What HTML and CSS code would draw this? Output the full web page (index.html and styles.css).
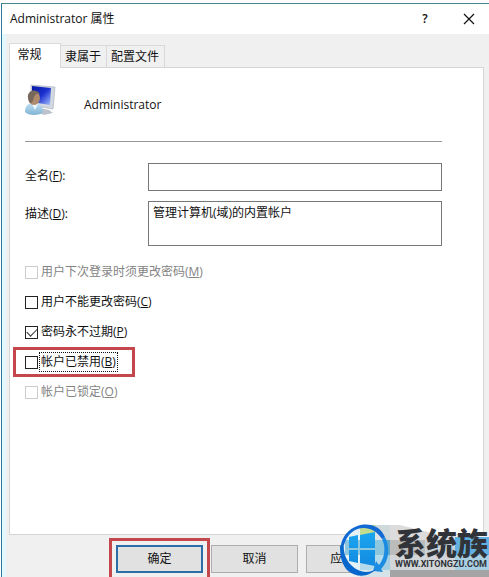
FILE: index.html
```
<!DOCTYPE html>
<html lang="zh-CN">
<head>
    <meta charset="UTF-8">
    <meta name="viewport" content="width=device-width, initial-scale=1.0">
    <title>Administrator 属性</title>
    <link rel="stylesheet" href="styles.css">
</head>
<body>
    <div class="window">
        <header class="titlebar">
            <h1>Administrator 属性</h1>
            <button type="button" class="help" aria-label="帮助">?</button>
            <button type="button" class="close" aria-label="关闭">
                <svg width="12" height="12" viewBox="0 0 12 12"><path d="M1 1l10 10M11 1L1 11" stroke="#111" stroke-width="1.2"/></svg>
            </button>
        </header>
        <form class="dialog">
            <div class="tabs">
                <button type="button" class="tab active">常规</button>
                <button type="button" class="tab">隶属于</button>
                <button type="button" class="tab">配置文件</button>
            </div>
            <div class="panel">
                <div class="account">
                    <svg width="34" height="34" viewBox="0 0 34 34">
                        <defs>
                            <linearGradient id="screen" x1="0" y1="0" x2="1" y2="1">
                                <stop offset="0" stop-color="#0818a0"/>
                                <stop offset=".5" stop-color="#1c30d0"/>
                                <stop offset="1" stop-color="#a8c4ff"/>
                            </linearGradient>
                            <linearGradient id="shirt" x1="0" y1="0" x2="0" y2="1">
                                <stop offset="0" stop-color="#c4e2f4"/>
                                <stop offset="1" stop-color="#7fb2d4"/>
                            </linearGradient>
                        </defs>
                        <path d="M15 24l9 2 4 3-9 2-7-3z" fill="#bcc3cb"/>
                        <path d="M6 1l24 2-2 22-22-4z" fill="#d4d9e0" stroke="#a3abb8" stroke-width=".6"/>
                        <path d="M7 2l19 2-1 17-18-3z" fill="url(#screen)"/>
                        <path d="M0 28c0-6 3-9 8-9 6 0 10 3 10 9-3 4-15 4-18 0z" fill="url(#shirt)"/>
                        <path d="M7 20l3 6 3-6z" fill="#eef8ff"/>
                        <ellipse cx="9" cy="14" rx="6" ry="7" fill="#b08a6c"/>
                        <path d="M3 14c-1-8 8-10 12-4-4-1-5 1-6 3-1 4-2 6-4 6z" fill="#77685c"/>
                    </svg>
                    <span>Administrator</span>
                </div>
                <div class="field">
                    <label for="fullname">全名(<u>F</u>):</label>
                    <input type="text" id="fullname">
                </div>
                <div class="field">
                    <label for="description">描述(<u>D</u>):</label>
                    <textarea id="description">管理计算机(域)的内置帐户</textarea>
                </div>
                <div class="options">
                    <label class="check disabled"><input type="checkbox" disabled><span>用户下次登录时须更改密码(<u>M</u>)</span></label>
                    <label class="check"><input type="checkbox"><span>用户不能更改密码(<u>C</u>)</span></label>
                    <label class="check"><input type="checkbox" checked><span>密码永不过期(<u>P</u>)</span></label>
                    <label class="check marked"><input type="checkbox"><span>帐户已禁用(<u>B</u>)</span></label>
                    <label class="check disabled"><input type="checkbox" disabled><span>帐户已锁定(<u>O</u>)</span></label>
                </div>
            </div>
            <div class="buttons">
                <button type="button" class="btn primary">确定</button>
                <button type="button" class="btn">取消</button>
                <button type="button" class="btn">应用(A)</button>
            </div>
        </form>
        <div class="watermark">
            <svg class="mosaic" viewBox="0 0 149 54">
                <path d="M20 2h15v15H20z" fill="#bbd985"/>
                <path d="M35 2h15v15H35z" fill="#d0d9da"/>
                <path d="M50 2h10l36 9h20v6H50z" fill="#dcdcdc"/>
                <path d="M5 17h15v11H5zM35 17h15v15H35z" fill="#62a8c5"/>
                <path d="M35 32h15v15H35z" fill="#a5cfe2"/>
                <path d="M20 47h30v7H20z" fill="#d5e2e7"/>
                <path d="M50 17h35v15H50z" fill="#bcbcbc"/>
                <path d="M50 32h65v15H50z" fill="#d3d6d8"/>
                <path d="M85 17h30v15H85z" fill="#c9d4da"/>
                <path d="M115 14h34v18h-34z" fill="#62b0e2"/>
                <path d="M115 32h34v15h-34z" fill="#a9cfe4"/>
                <path d="M50 47h99v7H50z" fill="#a4a4a4"/>
            </svg>
            <svg class="logo" width="50" height="54" viewBox="0 0 50 54">
                <defs>
                    <clipPath id="disc"><circle cx="24" cy="26" r="22"/></clipPath>
                    <linearGradient id="pane" x1="0" y1="0" x2="0" y2="1">
                        <stop offset="0" stop-color="#1ba6f0"/>
                        <stop offset="1" stop-color="#128ae0"/>
                    </linearGradient>
                </defs>
                <g clip-path="url(#disc)">
                    <path d="M0 0h50v54H0z" fill="#e4f1f6"/>
                    <path d="M20 0h15v17H20z" fill="#c3dd8c"/>
                    <path d="M35 0h15v17H35z" fill="#dbe3e4"/>
                    <path d="M5 17h45v15H5z" fill="#8cc6df"/>
                    <path d="M20 32h30v15H20z" fill="#b4dbeb"/>
                </g>
                <path d="M1 22C4 5 24-4 38 5c3 2 5 5 7 9l-3 2C32 0 10 1 4 22z" fill="#1269d3"/>
                <path d="M45 14c6 12 3 25-4 32l2 3-10-1 3-10 3 4c6-7 7-18 3-26z" fill="#1c8ce2"/>
                <path d="M0 23l4-3c-2 15 8 28 22 29 4 0 7-1 10-3-7 8-19 9-28 2C2 42 0 34 0 23z" fill="#0867cc"/>
                <path d="M9 14l9-2v13H9zM20 12l15-3v16H20zM9 27h9v13l-9-2zM20 27h15v16l-15-3z" fill="url(#pane)"/>
            </svg>
            <div class="brand">
                <strong>系统族</strong>
                <span>WWW.XITONGZU.COM</span>
            </div>
        </div>
    </div>
</body>
</html>
```
FILE: styles.css
```
* {
    box-sizing: border-box;
}
body {
    margin: 0;
    padding: 3px 0 0 1px;
    background: #fff;
    color: #111;
    font-family: "Open Sans", "Noto Sans CJK SC", sans-serif;
    font-size: 12px;
    line-height: 18px;
    overflow: hidden;
}
button, input, textarea {
    font: inherit;
    color: inherit;
    margin: 0;
}
.window {
    position: relative;
    display: flex;
    flex-direction: column;
    min-height: calc(100vh - 3px);
    border-top: 1px solid #42868f;
    border-left: 1px solid #2c7a9c;
    background: #f0f0f0;
    box-shadow: inset 4px 0 #e2f8fd;
}
.titlebar {
    display: flex;
    align-items: center;
    height: 30px;
    padding: 0 12px 0 8px;
    background: #fff;
}
.titlebar h1 {
    flex: 1;
    margin: 0;
    font-size: 12px;
    font-weight: normal;
}
.titlebar button {
    display: flex;
    align-items: center;
    justify-content: center;
    width: 16px;
    height: 20px;
    padding: 0;
    border: 0;
    background: none;
}
.titlebar .help {
    margin-right: 28px;
    font-weight: 600;
}
.dialog {
    flex: 1;
    display: flex;
    flex-direction: column;
    padding: 9px 5px 0 7px;
}
.tabs {
    display: flex;
    align-items: flex-end;
    height: 25px;
    margin-bottom: -1px;
}
.tab {
    height: 23px;
    padding: 0 5px 0 4px;
    border: 1px solid #d9d9d9;
    border-left: 0;
    background: #f0f0f0;
}
.tab.active {
    z-index: 1;
    width: 52px;
    height: 25px;
    padding: 0 18px 3px 7px;
    border-left: 1px solid #d9d9d9;
    border-bottom: 0;
    background: #fff;
}
.panel {
    flex: 1;
    padding: 16px 41px 16px 15px;
    border: 1px solid #d5d5d5;
    background: #fff;
}
.account {
    display: flex;
    gap: 25px;
    height: 58px;
    margin-bottom: 21px;
    border-bottom: 1px solid #999;
}
.account span {
    padding-top: 12px;
}
.field {
    display: flex;
    margin-bottom: 10px;
}
.field label {
    width: 123px;
    padding-top: 4px;
}
.field input,
.field textarea {
    flex: 1;
    min-width: 0;
    height: 28px;
    padding: 2px 4px;
    border: 1px solid #777;
    border-radius: 0;
    background: #fff;
    resize: none;
}
.field textarea {
    height: 45px;
}
.options {
    display: flex;
    flex-direction: column;
    align-items: flex-start;
    margin-top: 11px;
}
.check {
    display: flex;
    align-items: center;
    gap: 2px;
    height: 30px;
}
.check input {
    display: grid;
    place-items: center;
    appearance: none;
    width: 13px;
    height: 13px;
    border: 1px solid #222;
    background: #fff;
}
.check input:checked::after {
    content: "";
    width: 9px;
    height: 5px;
    margin-bottom: 2px;
    border: solid #333;
    border-width: 0 0 1px 1px;
    transform: rotate(-45deg);
}
.check span {
    padding: 0 1px;
}
.disabled {
    color: #838383;
}
.disabled input {
    border-color: #ccc;
}
.marked {
    margin-left: -12px;
    padding: 0 15px 0 9px;
    border: 3px solid #c4474c;
}
.marked span {
    outline: 1px dotted #111;
}
.buttons {
    display: flex;
    gap: 8px;
    padding: 10px 0 4px 107px;
}
.btn {
    width: 87px;
    height: 28px;
    padding: 0;
    border: 1px solid #adadad;
    background: #e1e1e1;
}
.btn.primary {
    border: 2px solid #2c6fa8;
    outline: 3px solid #c4474c;
    outline-offset: 4px;
}
/* site mark over the lower right corner */
.watermark {
    position: absolute;
    right: 0;
    bottom: 0;
    display: flex;
    width: 149px;
    height: 54px;
}
.mosaic {
    position: absolute;
    width: 100%;
    height: 100%;
}
.logo {
    position: relative;
    flex: none;
}
.brand {
    position: relative;
    display: flex;
    flex-direction: column;
    margin-left: 5px;
    color: #303338;
    white-space: nowrap;
}
.brand strong {
    padding-top: 5px;
    font-size: 31px;
    font-weight: 900;
    line-height: 31px;
}
.brand span {
    font: bold 9px/10px Roboto, sans-serif;
}
```
